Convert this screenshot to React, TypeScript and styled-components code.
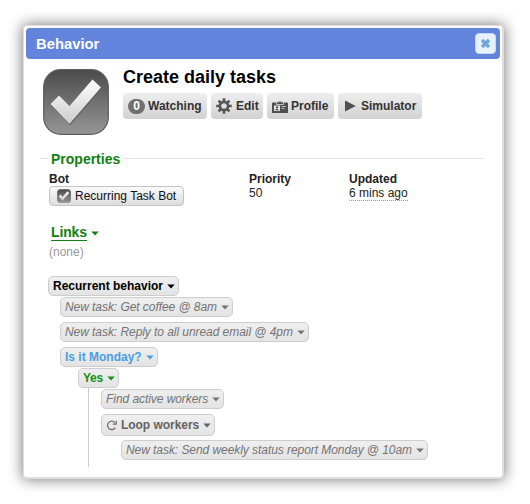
import React from "react";
import styled, { createGlobalStyle } from "styled-components";

const GlobalStyle = createGlobalStyle`
  * { box-sizing: border-box; }
  body { margin: 0; background: #fff; }
`;

const Page = styled.div`
  width: 530px;
  height: 504px;
  overflow: hidden;
  padding: 25px 0 0 23px;
  font: 12px/14px "Liberation Sans", Helvetica, Arial, sans-serif;
  color: #222;
`;

const Dialog = styled.section`
  width: 481px;
  height: 454px;
  padding: 2px;
  border: 1px solid #dedede;
  border-right-width: 2px;
  border-bottom-width: 2px;
  border-radius: 4px;
  background: #fff;
  box-shadow: 0 0 14px 1px rgba(0, 0, 0, 0.5);
`;

const TitleBar = styled.header`
  display: flex;
  align-items: center;
  justify-content: space-between;
  width: 474px;
  height: 31px;
  padding: 0 4px 0 10px;
  border-radius: 4px;
  background: #6284dc;
  color: #fff;
  font-size: 14.8px;
  font-weight: bold;
`;

const CloseButton = styled.button`
  display: flex;
  align-items: center;
  justify-content: center;
  width: 21px;
  height: 21px;
  padding: 0;
  border: 1px solid #c3dcf7;
  border-radius: 4px;
  background: #e6f1fc;
`;

const Summary = styled.div`
  display: flex;
  gap: 14px;
  height: 83px;
  padding: 10px 0 0 17px;
`;

const Heading = styled.div``;

const Title = styled.h1`
  margin: -2px 0 6px;
  font-size: 18px;
  line-height: 20px;
  color: #000;
`;

const Toolbar = styled.div`
  display: flex;
  gap: 4px;
`;

const ToolButton = styled.button<{ $width: number; $gap: number }>`
  display: flex;
  align-items: center;
  gap: ${(p) => p.$gap}px;
  width: ${(p) => p.$width}px;
  height: 26px;
  padding: 0 0 1px 5px;
  border: 0;
  border-radius: 4px;
  background: linear-gradient(#eeeeee, #d2d2d2);
  font: bold 12px/14px "Liberation Sans", Arial, sans-serif;
  color: #333;
  white-space: nowrap;

  svg {
    flex: none;
    margin-top: 1px;
  }
`;

const Count = styled.span`
  width: 17px;
  height: 15px;
  margin-top: 1px;
  border-radius: 8px;
  background: #707070;
  color: #fff;
  line-height: 15px;
  text-align: center;
`;

const Legend = styled.div`
  display: flex;
  align-items: center;
  gap: 3px;
  height: 16px;
  margin: 9px 15px 0 14px;
  color: #118011;
  font-size: 14px;
  font-weight: bold;

  &::before,
  &::after {
    content: "";
    height: 1px;
    margin-top: -2px;
    background: #e4e4e4;
  }
  &::before { width: 8px; }
  &::after { flex: 1; }
`;

const Properties = styled.dl`
  display: grid;
  grid-template-columns: 200px 100px 100px;
  margin: 5px 0 0 23px;
`;

const Property = styled.div`
  dt { font-weight: bold; }
  dd { margin: 0; }
`;

const BotLink = styled.button`
  display: flex;
  align-items: center;
  gap: 4px;
  width: 135px;
  height: 20px;
  padding: 0 0 0 7px;
  border: 1px solid #c4c4c4;
  border-radius: 4px;
  background: linear-gradient(#fafafa, #dddddd);
  font: 12px/14px "Liberation Sans", Arial, sans-serif;
  color: #111;
  white-space: nowrap;
`;

const Timestamp = styled.span`
  display: inline-block;
  height: 15px;
  border-bottom: 1px dotted #999;
`;

const LinksHeading = styled.h2`
  display: flex;
  align-items: center;
  gap: 4px;
  margin: 19px 0 0 25px;
  font-size: 14px;
  line-height: 15px;
  letter-spacing: -0.15px;
  color: #118011;

  span { border-bottom: 1px solid #118011; }
`;

const Empty = styled.p`
  margin: 4px 0 0 23px;
  color: #999;
`;

const Tree = styled.div`
  display: flex;
  flex-direction: column;
  align-items: flex-start;
  margin: 17px 0 0 22px;
`;

const tones = {
  root: "font-weight: bold; color: #000;",
  action: "font-style: italic; letter-spacing: -0.06px; color: #747474;",
  decision: "font-weight: bold; color: #4a9ee2;",
  outcome: "font-weight: bold; letter-spacing: -0.3px; color: #159015;",
  loop: "font-weight: bold; letter-spacing: -0.04px; color: #626262;",
};

type Tone = keyof typeof tones;

const Chip = styled.div<{ $tone: Tone }>`
  display: flex;
  align-items: center;
  gap: 4px;
  height: ${(p) => (p.$tone === "loop" ? 22 : 20)}px;
  padding: 0 3px 0 4px;
  border: 1px solid #cdcdcd;
  border-radius: 5px;
  background: linear-gradient(#efefef, #e3e3e3);
  white-space: nowrap;
  ${(p) => tones[p.$tone]}
`;

const Steps = styled.div`
  display: flex;
  flex-direction: column;
  align-items: flex-start;
  gap: 5px;
  margin: 1px 0 0 12px;
`;

const Outcome = styled.div`
  margin: 1px 0 0 30px;
`;

const Branch = styled.div`
  display: flex;
  flex-direction: column;
  align-items: flex-start;
  gap: 5px;
  height: 79px;
  margin-left: 40px;
  padding: 1px 0 0 12px;
  border-left: 1px solid #cccccc;
`;

const Nested = styled.div`
  margin: -1px 0 0 20px;
`;

const Caret = () => (
  <svg width="8" height="6" viewBox="0 0 8 6" fill="currentColor">
    <path d="M.3 1.500h7.400L4 5.500z" />
  </svg>
);

const CheckTile = ({ size, id }: { size: number; id: string }) => (
  <svg width={size} height={size} viewBox="0 0 66 66">
    <defs>
      <linearGradient id={`${id}-tile`} x1="0" y1="0" x2="0" y2="1">
        <stop offset="0" stopColor="#4b4b4b" />
        <stop offset="1" stopColor="#969696" />
      </linearGradient>
      <linearGradient id={`${id}-tick`} x1="0" y1="0" x2="0" y2="1">
        <stop offset="0" stopColor="#ffffff" />
        <stop offset="1" stopColor="#cccccc" />
      </linearGradient>
    </defs>
    <rect x=".7" y=".7" width="64.6" height="64.6" rx="17" fill={`url(#${id}-tile)`} stroke="#5c5c5c" strokeWidth="1.2" />
    <path d="M8 36l8.500-8.500L27 37 50 11.500l8.500 7.500L27 56.500z" fill="#333" opacity=".45" />
    <path d="M7.500 35l8.500-8.500L26.500 37 49.500 10.500l8.500 8L26.500 55z" fill={`url(#${id}-tick)`} />
  </svg>
);

const Gear = () => (
  <svg width="16" height="16" viewBox="0 0 16 16">
    <g stroke="#555" strokeWidth="2.600">
      <path d="M8 .3v15.400M.3 8h15.400M2.600 2.600l10.800 10.800M13.400 2.600L2.600 13.400" />
    </g>
    <circle cx="8" cy="8" r="4.100" fill="#e0e0e0" stroke="#555" strokeWidth="2.700" />
  </svg>
);

const Badge = () => (
  <svg width="16" height="15" viewBox="0 0 16 15">
    <path d="M1 3.500h14a1 1 0 0 1 1 1V14H0V4.500a1 1 0 0 1 1-1z" fill="#505050" />
    <path d="M4.500 5.500V3h2a1.600 1.600 0 0 1 3 0h2v2.500z" fill="#505050" stroke="#dedede" strokeWidth=".8" />
    <path d="M2 6.500h6V12H2z" fill="#e4e4e4" />
    <circle cx="5" cy="8.300" r="1.100" fill="#505050" />
    <path d="M3.200 11.300q0-1.500 1.800-1.500t1.800 1.500z" fill="#505050" />
    <path d="M9.500 7.500H14M9.500 9.500H12.500" stroke="#b8b8b8" />
  </svg>
);

const Play = () => (
  <svg width="13" height="12" viewBox="0 0 13 12">
    <path d="M2 .5L12.800 6 2 11.500z" fill="#505050" />
  </svg>
);

const LoopIcon = () => (
  <svg width="11" height="12" viewBox="0 0 11 12" fill="none" stroke="#6b6b6b" strokeWidth="1.200">
    <path d="M8.900 3.600A4.200 4.200 0 1 0 9.300 8.700" />
    <path d="M10.200 1.800v3.300H6.800" />
  </svg>
);

const CloseIcon = () => (
  <svg width="11" height="11" viewBox="0 0 11 11">
    <path d="M2 2l7 7M9 2L2 9" stroke="#70a7da" strokeWidth="3.300" />
  </svg>
);

function Step({ tone, children }: { tone: Tone; children: React.ReactNode }) {
  return (
    <Chip $tone={tone}>
      {tone === "loop" && <LoopIcon />}
      {children}
      <Caret />
    </Chip>
  );
}

export default function App() {
  return (
    <Page>
      <GlobalStyle />
      <Dialog>
        <TitleBar>
          Behavior
          <CloseButton aria-label="Close"><CloseIcon /></CloseButton>
        </TitleBar>
        <Summary>
          <CheckTile size={66} id="avatar" />
          <Heading>
            <Title>Create daily tasks</Title>
            <Toolbar>
              <ToolButton $width={84} $gap={3}><Count>0</Count>Watching</ToolButton>
              <ToolButton $width={52} $gap={4}><Gear />Edit</ToolButton>
              <ToolButton $width={67} $gap={3}><Badge />Profile</ToolButton>
              <ToolButton $width={84} $gap={5}><Play />Simulator</ToolButton>
            </Toolbar>
          </Heading>
        </Summary>
        <Legend>Properties</Legend>
        <Properties>
          <Property>
            <dt>Bot</dt>
            <dd><BotLink><CheckTile size={14} id="bot" />Recurring Task Bot</BotLink></dd>
          </Property>
          <Property>
            <dt>Priority</dt>
            <dd>50</dd>
          </Property>
          <Property>
            <dt>Updated</dt>
            <dd><Timestamp>6 mins ago</Timestamp></dd>
          </Property>
        </Properties>
        <LinksHeading><span>Links</span><Caret /></LinksHeading>
        <Empty>(none)</Empty>
        <Tree>
          <Step tone="root">Recurrent behavior</Step>
          <Steps>
            <Step tone="action">New task: Get coffee @ 8am</Step>
            <Step tone="action">New task: Reply to all unread email @ 4pm</Step>
            <Step tone="decision">Is it Monday?</Step>
          </Steps>
          <Outcome>
            <Step tone="outcome">Yes</Step>
          </Outcome>
          <Branch>
            <Step tone="action">Find active workers</Step>
            <Step tone="loop">Loop workers</Step>
            <Nested>
              <Step tone="action">New task: Send weekly status report Monday @ 10am</Step>
            </Nested>
          </Branch>
        </Tree>
      </Dialog>
    </Page>
  );
}
